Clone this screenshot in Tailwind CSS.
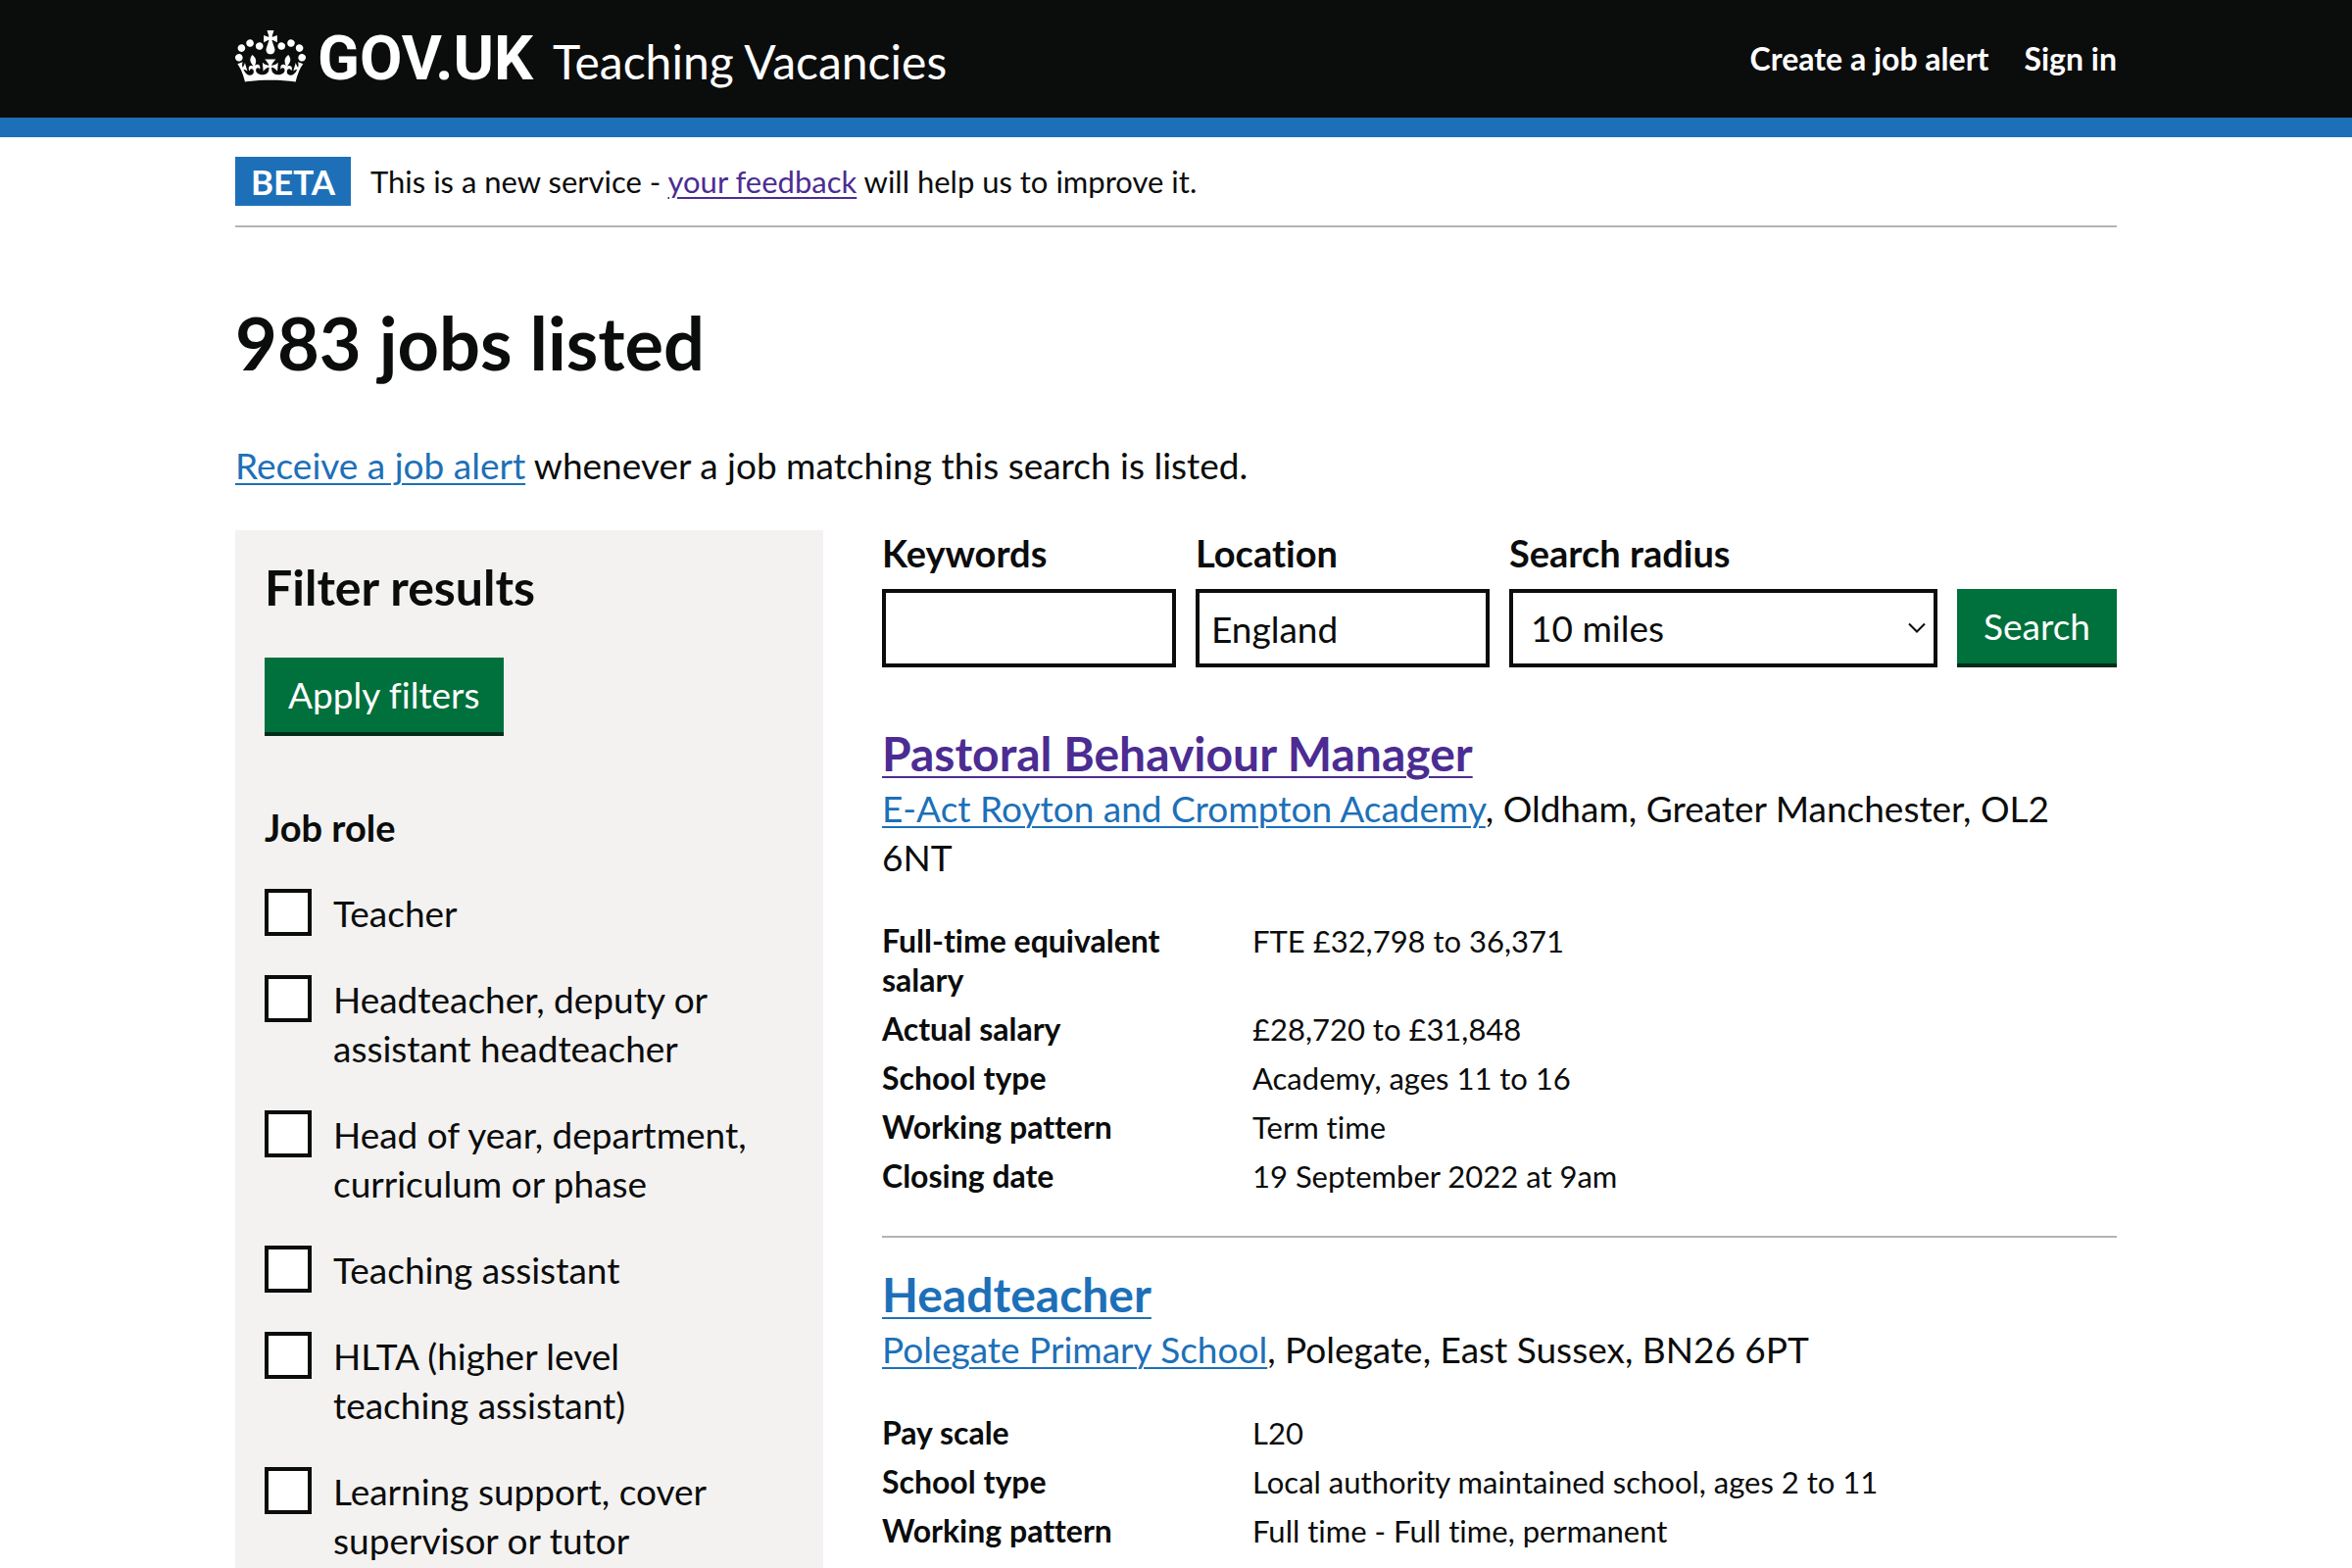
<!DOCTYPE html>
<html lang="en">
<head>
<meta charset="utf-8">
<meta name="viewport" content="width=device-width, initial-scale=1">
<title>983 jobs listed - Teaching Vacancies - GOV.UK</title>
<script src="https://cdn.jsdelivr.net/npm/@tailwindcss/browser@4"></script>
</head>
<body class="bg-white font-[Lato,sans-serif] text-[37px] leading-[50px] text-[#0b0c0c] [font-variant-ligatures:none]">

<header class="border-b-20 border-[#1d70b8] bg-[#0b0c0c] text-white">
  <div class="mx-auto flex h-[120px] w-4/5 max-w-[1920px] items-center justify-between">
    <div class="flex items-baseline gap-5">
      <a href="#" class="flex items-baseline gap-3 font-[Roboto,sans-serif] text-[63px] leading-[72px] font-bold" aria-label="GOV.UK">
        <svg class="h-[53px] w-[72px] translate-y-[3px]" viewBox="0 0 132 97" fill="currentColor" aria-hidden="true">
          <path fill-rule="evenodd" d="M25 30.2c3.5 1.5 7.7-.2 9.1-3.7 1.5-3.6-.2-7.8-3.9-9.2-3.6-1.4-7.6.3-9.1 3.9-1.4 3.5.3 7.5 3.9 9zM9 39.5c3.6 1.5 7.8-.2 9.2-3.7 1.5-3.6-.2-7.8-3.9-9.1-3.6-1.5-7.6.2-9.1 3.8-1.4 3.5.3 7.5 3.8 9zM4.4 57.2c3.5 1.5 7.7-.2 9.1-3.8 1.5-3.6-.2-7.7-3.9-9.1-3.5-1.5-7.6.3-9.1 3.8-1.4 3.5.3 7.6 3.9 9.1zm38.3-21.4c3.5 1.5 7.7-.2 9.1-3.8 1.5-3.6-.2-7.7-3.9-9.1-3.6-1.5-7.6.3-9.1 3.8-1.3 3.6.4 7.7 3.9 9.1zm64.4-5.6c-3.6 1.5-7.8-.2-9.1-3.7-1.5-3.6.2-7.8 3.8-9.2 3.6-1.4 7.7.3 9.2 3.9 1.3 3.5-.4 7.5-3.9 9zm15.9 9.3c-3.6 1.5-7.7-.2-9.1-3.7-1.5-3.6.2-7.8 3.7-9.1 3.6-1.5 7.7.2 9.2 3.8 1.5 3.5-.3 7.5-3.8 9zm4.7 17.7c-3.6 1.5-7.8-.2-9.2-3.8-1.5-3.6.2-7.7 3.9-9.1 3.6-1.5 7.7.3 9.2 3.8 1.3 3.5-.4 7.6-3.9 9.1zM89.3 35.8c-3.6 1.5-7.8-.2-9.2-3.8-1.4-3.6.2-7.7 3.9-9.1 3.6-1.5 7.7.3 9.2 3.8 1.4 3.6-.3 7.7-3.9 9.1zM69.7 17.7l8.9 4.7V9.3l-8.9 2.8c-.2-.3-.5-.6-.9-.9L72.4 0H59.6l3.5 11.2c-.3.3-.6.5-.9.9l-8.8-2.8v13.1l8.8-4.7c.3.3.6.7.9.9l-5 15.4v.1c-.2.8-.4 1.6-.4 2.4 0 4.1 3.1 7.5 7 8.1h.2c.3 0 .7.1 1 .1.4 0 .7 0 1-.1h.2c4-.6 7.1-4.1 7.1-8.1 0-.8-.1-1.7-.4-2.4V34l-5.1-15.4c.4-.2.7-.6 1-.9zM66 92.8c16.9 0 32.8 1.1 47.1 3.2 4-16.9 8.9-26.7 14-33.5l-9.6-3.4c1 4.9 1.1 7.2 0 10.2-1.5-1.4-3-4.3-4.2-8.7L108.6 76c2.8-2 5-3.2 7.5-3.3-4.4 9.4-10 11.9-13.6 11.2-4.3-.8-6.3-4.6-5.6-7.9 1-4.7 5.7-5.9 8-.5 4.3-8.7-3-11.4-7.6-8.8 7.1-7.2 7.9-13.5 2.1-21.1-8 6.1-8.1 12.3-4.5 20.8-4.7-5.4-12.1-2.5-9.5 6.2 3.4-5.2 7.9-2 7.2 3.1-.6 4.3-6.4 7.8-13.5 7.2-10.3-.9-10.9-8-11.2-13.8 2.5-.5 7.1 1.8 11 7.3L80.2 60c-4.1 4.4-8 5.3-12.3 5.4 1.4-4.4 8-11.6 8-11.6H55.5s6.4 7.2 7.9 11.6c-4.2-.1-8-1-12.3-5.4l1.4 16.4c3.9-5.5 8.5-7.7 10.9-7.3-.3 5.8-.9 12.8-11.1 13.8-7.2.6-12.9-2.9-13.5-7.2-.7-5 3.8-8.3 7.1-3.1 2.7-8.7-4.6-11.6-9.4-6.2 3.7-8.5 3.6-14.7-4.6-20.8-5.8 7.6-5 13.9 2.2 21.1-4.7-2.6-11.9.1-7.7 8.8 2.3-5.5 7.1-4.2 8.1.5.7 3.3-1.3 7.1-5.7 7.9-3.5.7-9-1.8-13.5-11.2 2.5.1 4.7 1.3 7.5 3.3l-4.7-15.4c-1.2 4.4-2.7 7.2-4.3 8.7-1.1-3-.9-5.3 0-10.2l-9.5 3.4c5 6.9 9.9 16.7 14 33.5 14.8-2.1 30.8-3.2 47.7-3.2z"/>
        </svg>
        <span>GOV.UK</span>
      </a>
      <a href="#" class="text-[48px] leading-[60px]">Teaching Vacancies</a>
    </div>
    <nav class="flex gap-9 text-[32px] leading-[40px] font-bold" aria-label="Account">
      <a href="#">Create a job alert</a>
      <a href="#">Sign in</a>
    </nav>
  </div>
</header>

<div class="mx-auto w-4/5 max-w-[1920px]">
  <div class="flex items-center gap-5 border-b-2 border-[#b1b4b6] py-5 text-[31px] leading-[50px]">
    <strong class="bg-[#1d70b8] px-4 text-[35px] text-white">BETA</strong>
    <p>This is a new service - <a href="#" class="text-[#4c2c92] underline decoration-2 underline-offset-4">your feedback</a> will help us to improve it.</p>
  </div>

  <main>
    <h1 class="mt-[78px] text-[74px] leading-[80px] font-bold">983 jobs listed</h1>
    <p class="mt-[60px]"><a href="#" class="text-[#1d70b8] underline decoration-2 underline-offset-4">Receive a job alert</a> whenever a job matching this search is listed.</p>

    <div class="mt-[41px] flex gap-[60px]">
      <form class="w-[600px] shrink-0 bg-[#f3f2f1] px-[30px] pt-7 pb-8">
        <h2 class="text-[50px] leading-[60px] font-bold">Filter results</h2>
        <button type="submit" class="mt-[42px] block h-[80px] border-b-4 border-[#002d18] bg-[#00703c] px-6 text-white">Apply filters</button>
        <fieldset class="mt-[68px]">
          <legend class="text-[38px] leading-[50px] font-bold">Job role</legend>
          <div class="mt-[38px] flex flex-col gap-[38px] pr-10">
            <div class="flex items-start gap-[22px]">
              <input id="teacher" type="checkbox" class="size-12 shrink-0 appearance-none border-4 border-[#0b0c0c] bg-white checked:bg-[#0b0c0c]">
              <label for="teacher">Teacher</label>
            </div>
            <div class="flex items-start gap-[22px]">
              <input id="leadership" type="checkbox" class="size-12 shrink-0 appearance-none border-4 border-[#0b0c0c] bg-white checked:bg-[#0b0c0c]">
              <label for="leadership">Headteacher, deputy or assistant headteacher</label>
            </div>
            <div class="flex items-start gap-[22px]">
              <input id="middle" type="checkbox" class="size-12 shrink-0 appearance-none border-4 border-[#0b0c0c] bg-white checked:bg-[#0b0c0c]">
              <label for="middle">Head of year, department, curriculum or phase</label>
            </div>
            <div class="flex items-start gap-[22px]">
              <input id="assistant" type="checkbox" class="size-12 shrink-0 appearance-none border-4 border-[#0b0c0c] bg-white checked:bg-[#0b0c0c]">
              <label for="assistant">Teaching assistant</label>
            </div>
            <div class="flex items-start gap-[22px]">
              <input id="hlta" type="checkbox" class="size-12 shrink-0 appearance-none border-4 border-[#0b0c0c] bg-white checked:bg-[#0b0c0c]">
              <label for="hlta">HLTA (higher level teaching assistant)</label>
            </div>
            <div class="flex items-start gap-[22px]">
              <input id="support" type="checkbox" class="size-12 shrink-0 appearance-none border-4 border-[#0b0c0c] bg-white checked:bg-[#0b0c0c]">
              <label for="support">Learning support, cover supervisor or tutor</label>
            </div>
          </div>
        </fieldset>
      </form>

      <div class="min-w-0 flex-1">
        <form class="grid grid-cols-[300px_300px_1fr_163px] items-end gap-5">
          <div>
            <label for="keywords" class="block text-[38px] leading-[46px] font-bold">Keywords</label>
            <input id="keywords" type="text" class="mt-[14px] block h-[80px] w-full border-4 border-[#0b0c0c] px-3">
          </div>
          <div>
            <label for="location" class="block text-[38px] leading-[46px] font-bold">Location</label>
            <input id="location" type="text" value="England" class="mt-[14px] block h-[80px] w-full border-4 border-[#0b0c0c] px-3">
          </div>
          <div>
            <label for="radius" class="block text-[38px] leading-[46px] font-bold">Search radius</label>
            <div class="relative mt-[14px]">
              <select id="radius" class="block h-[80px] w-full appearance-none border-4 border-[#0b0c0c] bg-white pr-12 pl-[18px]">
                <option>10 miles</option>
              </select>
              <svg class="pointer-events-none absolute top-[34px] right-[11px] h-3 w-5" viewBox="0 0 20 12" fill="none" stroke="#0b0c0c" stroke-width="2" aria-hidden="true"><path d="M2 1.5l8 8 8-8"/></svg>
            </div>
          </div>
          <button type="submit" class="h-[80px] border-b-4 border-[#002d18] bg-[#00703c] text-white">Search</button>
        </form>

        <article class="mt-[57px] border-b-2 border-[#b1b4b6] pb-[41px]">
          <h2 class="text-[48px] leading-[62px] font-bold"><a href="#" class="text-[#4c2c92] underline decoration-2 underline-offset-5">Pastoral Behaviour Manager</a></h2>
          <p class="pr-5"><a href="#" class="text-[#1d70b8] underline decoration-2 underline-offset-4">E-Act Royton and Crompton Academy</a>, Oldham, Greater Manchester, OL2 6NT</p>
          <dl class="mt-10 grid grid-cols-[30%_70%] gap-y-[10px] text-[31px] leading-[40px]">
            <dt class="pr-5 text-[32px] font-bold">Full-time equivalent salary</dt><dd>FTE £32,798 to 36,371</dd>
            <dt class="pr-5 text-[32px] font-bold">Actual salary</dt><dd>£28,720 to £31,848</dd>
            <dt class="pr-5 text-[32px] font-bold">School type</dt><dd>Academy, ages 11 to 16</dd>
            <dt class="pr-5 text-[32px] font-bold">Working pattern</dt><dd>Term time</dd>
            <dt class="pr-5 text-[32px] font-bold">Closing date</dt><dd>19 September 2022 at 9am</dd>
          </dl>
        </article>

        <article class="mt-[27px]">
          <h2 class="text-[48px] leading-[62px] font-bold"><a href="#" class="text-[#1d70b8] underline decoration-2 underline-offset-5">Headteacher</a></h2>
          <p class="pr-5"><a href="#" class="text-[#1d70b8] underline decoration-2 underline-offset-4">Polegate Primary School</a>, Polegate, East Sussex, BN26 6PT</p>
          <dl class="mt-10 grid grid-cols-[30%_70%] gap-y-[10px] text-[31px] leading-[40px]">
            <dt class="pr-5 text-[32px] font-bold">Pay scale</dt><dd>L20</dd>
            <dt class="pr-5 text-[32px] font-bold">School type</dt><dd>Local authority maintained school, ages 2 to 11</dd>
            <dt class="pr-5 text-[32px] font-bold">Working pattern</dt><dd>Full time - Full time, permanent</dd>
          </dl>
        </article>
      </div>
    </div>
  </main>
</div>
</body>
</html>
